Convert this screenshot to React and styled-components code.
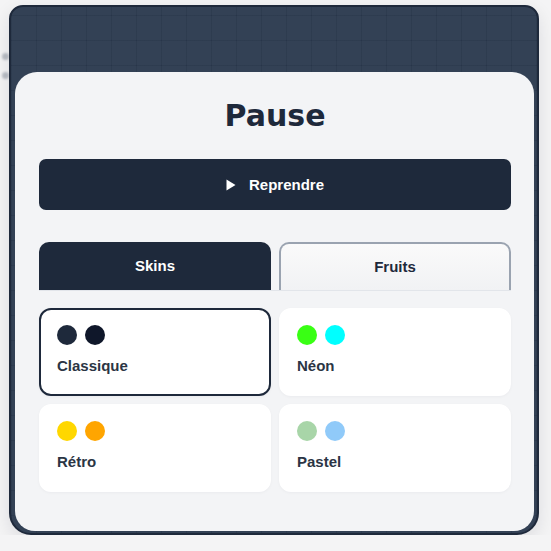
import styled, { createGlobalStyle } from "styled-components";

const GlobalStyle = createGlobalStyle`
  html, body {
    margin: 0;
    padding: 0;
    background: #f4f4f5;
    font-family: "Liberation Sans", Arial, sans-serif;
  }
`;

const skins = [
  { name: "Classique", colors: ["#1e293b", "#0f172a"], active: true },
  { name: "Néon", colors: ["#39ff14", "#00ffff"] },
  { name: "Rétro", colors: ["#ffd700", "#ffa500"] },
  { name: "Pastel", colors: ["#a8d5a8", "#90caf9"] },
];

// faint blurred specks that sit behind the board
const specks = [
  { x: 2, y: 53 },
  { x: 2, y: 72 },
  { x: 51, y: 537 },
  { x: 432, y: 536 },
  { x: 456, y: 538 },
];

const App = () => {
  return (
    <Stage>
      <GlobalStyle />
      <Board>
        <Panel>
          <Title>Pause</Title>
          <ResumeBtn>
            <svg width="10" height="12" viewBox="0 0 10 12">
              <path d="M0.5 0.5 L9.5 6 L0.5 11.5 Z" fill="#ffffff" />
            </svg>
            Reprendre
          </ResumeBtn>
          <Tabs>
            <Tab $active>Skins</Tab>
            <Tab>Fruits</Tab>
          </Tabs>
          <Grid>
            {skins.map((s) => (
              <Card key={s.name} $active={s.active}>
                <Dots>
                  {s.colors.map((c) => (
                    <Dot key={c} $color={c} />
                  ))}
                </Dots>
                <CardName>{s.name}</CardName>
              </Card>
            ))}
          </Grid>
        </Panel>
      </Board>
      {specks.map((s, i) => (
        <Speck key={i} style={{ left: s.x, top: s.y }} />
      ))}
    </Stage>
  );
};

const Stage = styled.div`
  position: relative;
  padding: 5px 0 0 9px;
`;

const Speck = styled.span`
  position: absolute;
  z-index: 0;
  width: 7px;
  height: 7px;
  border-radius: 50%;
  background: #b9bdc4;
  filter: blur(1.2px);
`;

const Board = styled.div`
  position: relative;
  z-index: 1;
  box-sizing: border-box;
  width: 530px;
  height: 530px;
  border: 2px solid #1e293b;
  border-radius: 14px 14px 22px 22px;
  background-color: #334155;
  background-image: linear-gradient(rgba(15, 23, 42, 0.13) 1px, transparent 1px),
    linear-gradient(90deg, rgba(15, 23, 42, 0.13) 1px, transparent 1px);
  background-size: 25px 25px;
  background-position: 0 8px;
  box-shadow: 0 6px 18px rgba(15, 23, 42, 0.1);
  display: flex;
  flex-direction: column;
  justify-content: flex-end;
  padding: 0 3px 2px 4px;
`;

const Panel = styled.div`
  box-sizing: border-box;
  height: 459px;
  background: #f3f4f6;
  border-radius: 22px 22px 20px 20px;
  padding: 24px 23px 0 24px;
  display: flex;
  flex-direction: column;
`;

const Title = styled.h1`
  margin: 0 0 23px;
  height: 40px;
  line-height: 40px;
  text-align: center;
  font-family: "DejaVu Sans", sans-serif;
  font-size: 30px;
  font-weight: 700;
  color: #1e293b;
`;

const ResumeBtn = styled.button`
  height: 51px;
  border: none;
  border-radius: 7px;
  background: #1e293b;
  color: #ffffff;
  font-family: inherit;
  font-size: 15px;
  font-weight: 700;
  display: flex;
  align-items: center;
  justify-content: center;
  gap: 13px;
  cursor: pointer;
`;

const Tabs = styled.div`
  margin-top: 32px;
  display: grid;
  grid-template-columns: 1fr 1fr;
  gap: 8px;
  border-bottom: 1px solid #e2e5ea;
`;

const Tab = styled.button`
  box-sizing: border-box;
  height: 48px;
  padding: 0 0 2px;
  border: ${(p) => (p.$active ? "none" : "2px solid #9aa3b0")};
  border-bottom: none;
  border-radius: 10px 10px 0 0;
  background: ${(p) => (p.$active ? "#1e293b" : "linear-gradient(180deg, #fafafa, #f1f2f4)")};
  color: ${(p) => (p.$active ? "#ffffff" : "#1e293b")};
  font-family: inherit;
  font-size: 15px;
  font-weight: 700;
  cursor: pointer;
`;

const Grid = styled.div`
  margin-top: 17px;
  display: grid;
  grid-template-columns: 1fr 1fr;
  gap: 8px;
`;

const Card = styled.div`
  box-sizing: border-box;
  height: 88px;
  background: #ffffff;
  border: 2px solid ${(p) => (p.$active ? "#1e293b" : "#ffffff")};
  border-radius: 12px;
  padding: 15px 16px;
  display: flex;
  flex-direction: column;
  gap: 12px;
  box-shadow: 0 1px 3px rgba(15, 23, 42, 0.04);
`;

const Dots = styled.div`
  display: flex;
  gap: 8px;
`;

const Dot = styled.span`
  width: 20px;
  height: 20px;
  border-radius: 50%;
  background: ${(p) => p.$color};
`;

const CardName = styled.span`
  font-size: 15px;
  font-weight: 700;
  color: #2b3544;
`;

export default App;
